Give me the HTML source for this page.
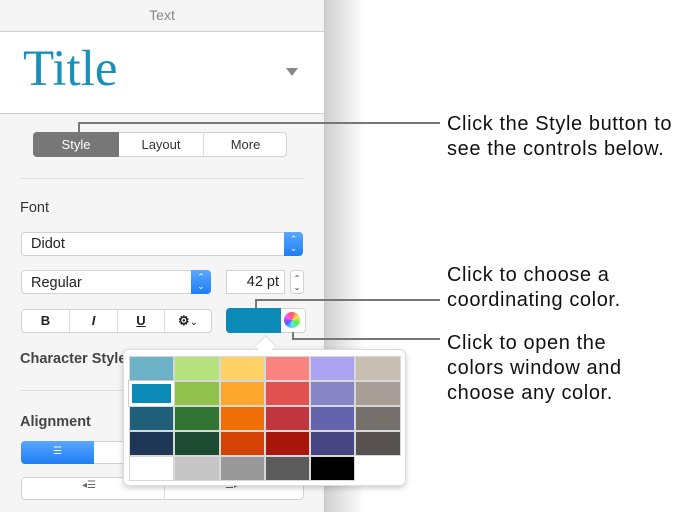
<!DOCTYPE html>
<html><head><style>
*{margin:0;padding:0;box-sizing:border-box}
body{width:690px;height:512px;background:#fff;position:relative;overflow:hidden;font-family:"Liberation Sans",sans-serif}
.a{position:absolute}
.panel{left:0;top:0;width:325px;height:512px;background:#f5f5f5;border-right:1px solid #c8c8c8}
.shadow{left:325px;top:0;width:40px;height:512px;background:linear-gradient(90deg,#d0d0d0,#fff)}
.btn{background:#fff;border:1px solid #d2d2d2;border-radius:4px}
.lbl{font-size:14.5px;color:#333}
.co{font-size:20px;letter-spacing:0.6px;color:#111;left:447px;line-height:25px;white-space:nowrap}
.ln{background:#777}
.stp{background:linear-gradient(#5aa7ff,#1d7ef5);border-radius:0 4px 4px 0;color:#fff;font-size:9px;text-align:center;line-height:9px}
</style></head><body>
<div class="a shadow"></div>
<div class="a panel"></div>
<div class="a" style="left:0;top:0;width:324px;height:32px;text-align:center;font-size:14px;color:#888;line-height:31px">Text</div>
<div class="a" style="left:0;top:31px;width:324px;height:83px;background:#fff;border-top:1px solid #cfcfcf;border-bottom:1px solid #cfcfcf"></div>
<div class="a" style="left:23px;top:40px;font-family:'Liberation Serif',serif;font-size:51px;color:#1a8fb8">Title</div>
<div class="a" style="left:286px;top:68px;width:0;height:0;border-left:6px solid transparent;border-right:6px solid transparent;border-top:8px solid #888"></div>
<div class="a btn" style="left:33px;top:132px;width:254px;height:25px"></div>
<div class="a" style="left:33px;top:132px;width:86px;height:25px;background:#777;border-radius:4px 0 0 4px;color:#fff;font-size:13px;text-align:center;line-height:25px">Style</div>
<div class="a" style="left:119px;top:132px;width:85px;height:25px;border-right:1px solid #ddd;font-size:13px;text-align:center;line-height:25px;color:#333">Layout</div>
<div class="a" style="left:204px;top:132px;width:83px;height:25px;font-size:13px;text-align:center;line-height:25px;color:#333">More</div>
<div class="a" style="left:20px;top:178px;width:285px;height:1px;background:#ddd"></div>
<div class="a lbl" style="left:20px;top:200px">Font</div>
<div class="a btn" style="left:21px;top:232px;width:282px;height:24px"></div>
<div class="a lbl" style="left:31px;top:236px;color:#222">Didot</div>
<div class="a stp" style="left:284px;top:232px;width:19px;height:24px;padding-top:3px">⌃<br>⌄</div>
<div class="a btn" style="left:21px;top:270px;width:190px;height:24px"></div>
<div class="a lbl" style="left:31px;top:275px;color:#222">Regular</div>
<div class="a stp" style="left:191px;top:270px;width:20px;height:24px;padding-top:3px">⌃<br>⌄</div>
<div class="a" style="left:226px;top:270px;width:59px;height:24px;background:#fff;border:1px solid #d2d2d2;font-size:14.5px;text-align:right;padding-right:5px;line-height:23px;color:#222">42 pt</div>
<div class="a btn" style="left:290px;top:270px;width:14px;height:24px;font-size:8px;text-align:center;line-height:9px;padding-top:3px;color:#333">⌃<br>⌄</div>
<div class="a btn" style="left:21px;top:309px;width:191px;height:24px;display:flex;font-size:13px;font-weight:bold;color:#222">
<div style="width:48px;text-align:center;line-height:22px;border-right:1px solid #ddd">B</div>
<div style="width:48px;text-align:center;line-height:22px;border-right:1px solid #ddd;font-style:italic">I</div>
<div style="width:47px;text-align:center;line-height:22px;border-right:1px solid #ddd;text-decoration:underline">U</div>
<div style="width:46px;text-align:center;line-height:22px">⚙︎<span style="font-weight:normal;font-size:10px">⌄</span></div></div>
<div class="a btn" style="left:226px;top:308px;width:80px;height:25px"></div>
<div class="a" style="left:226px;top:308px;width:55px;height:25px;background:#0a8ab5;border-radius:4px 0 0 4px"></div>
<div class="a" style="left:284px;top:312px;width:16px;height:16px;border-radius:50%;background:conic-gradient(#f55,#fd5,#5e5,#5ee,#55f,#f5f,#f55)"></div>
<div class="a lbl" style="left:20px;top:351px;font-weight:bold;color:#444">Character Style</div>
<div class="a" style="left:20px;top:390px;width:285px;height:1px;background:#ddd"></div>
<div class="a lbl" style="left:20px;top:414px;font-weight:bold;color:#444">Alignment</div>
<div class="a btn" style="left:21px;top:441px;width:140px;height:23px"></div>
<div class="a" style="left:21px;top:441px;width:73px;height:23px;background:linear-gradient(#5aa7ff,#1d7ef5);border-radius:4px 0 0 4px;color:#fff;text-align:center;font-size:10px;line-height:22px">☰</div>
<div class="a btn" style="left:21px;top:477px;width:283px;height:23px"></div>
<div class="a" style="left:164px;top:478px;width:1px;height:21px;background:#ddd"></div>
<div class="a" style="left:82px;top:480px;font-size:10px;color:#666">◂☰</div>
<div class="a" style="left:225px;top:480px;font-size:10px;color:#666">☰▸</div>
<div class="a" style="left:123px;top:349px;width:283px;height:137px;background:#fff;border:1px solid #ddd;border-radius:6px;box-shadow:0 2px 6px rgba(0,0,0,.2)"></div>
<div class="a" style="left:258px;top:338px;width:15px;height:15px;background:#fff;border-left:1px solid #ddd;border-top:1px solid #ddd;transform:rotate(45deg)"></div>
<div class="a" style="left:129px;top:356px;width:272px;display:grid;grid-template-columns:repeat(6,45.3px);grid-auto-rows:25px">
<div style="background:#6eb2c7;border:1px solid #d8d8d8"></div><div style="background:#b7e37e;border:1px solid #d8d8d8"></div><div style="background:#fdd165;border:1px solid #d8d8d8"></div><div style="background:#f8837f;border:1px solid #d8d8d8"></div><div style="background:#a9a3f1;border:1px solid #d8d8d8"></div><div style="background:#c8bdb1;border:1px solid #d8d8d8"></div>
<div style="background:#0a8ab5;border:3px solid #fff;outline:1px solid #ccc"></div><div style="background:#91c24d;border:1px solid #d8d8d8"></div><div style="background:#fca62d;border:1px solid #d8d8d8"></div><div style="background:#e05250;border:1px solid #d8d8d8"></div><div style="background:#8785c5;border:1px solid #d8d8d8"></div><div style="background:#a79d96;border:1px solid #d8d8d8"></div>
<div style="background:#1f5f7a;border:1px solid #d8d8d8"></div><div style="background:#327433;border:1px solid #d8d8d8"></div><div style="background:#f06f06;border:1px solid #d8d8d8"></div><div style="background:#bf363e;border:1px solid #d8d8d8"></div><div style="background:#6363ae;border:1px solid #d8d8d8"></div><div style="background:#76706c;border:1px solid #d8d8d8"></div>
<div style="background:#1e3756;border:1px solid #d8d8d8"></div><div style="background:#1c4b31;border:1px solid #d8d8d8"></div><div style="background:#d44206;border:1px solid #d8d8d8"></div><div style="background:#a8170a;border:1px solid #d8d8d8"></div><div style="background:#484683;border:1px solid #d8d8d8"></div><div style="background:#57524f;border:1px solid #d8d8d8"></div>
<div style="background:#fff;border:1px solid #d8d8d8"></div><div style="background:#c5c5c5;border:1px solid #d8d8d8"></div><div style="background:#999;border:1px solid #d8d8d8"></div><div style="background:#5c5c5c;border:1px solid #d8d8d8"></div><div style="background:#000;border:1px solid #d8d8d8"></div><div></div>
</div>
<div class="a ln" style="left:78px;top:123px;width:2px;height:10px"></div>
<div class="a ln" style="left:78px;top:122px;width:362px;height:2px"></div>
<div class="a ln" style="left:255px;top:300px;width:2px;height:8px"></div>
<div class="a ln" style="left:255px;top:299px;width:185px;height:2px"></div>
<div class="a ln" style="left:292px;top:332px;width:2px;height:7px"></div>
<div class="a ln" style="left:292px;top:338px;width:148px;height:2px"></div>
<div class="a co" style="top:112px">Click the Style button to<br>see the controls below.</div>
<div class="a co" style="top:263px">Click to choose a<br>coordinating color.</div>
<div class="a co" style="top:331px">Click to open the<br>colors window and<br>choose any color.</div>
</body></html>
